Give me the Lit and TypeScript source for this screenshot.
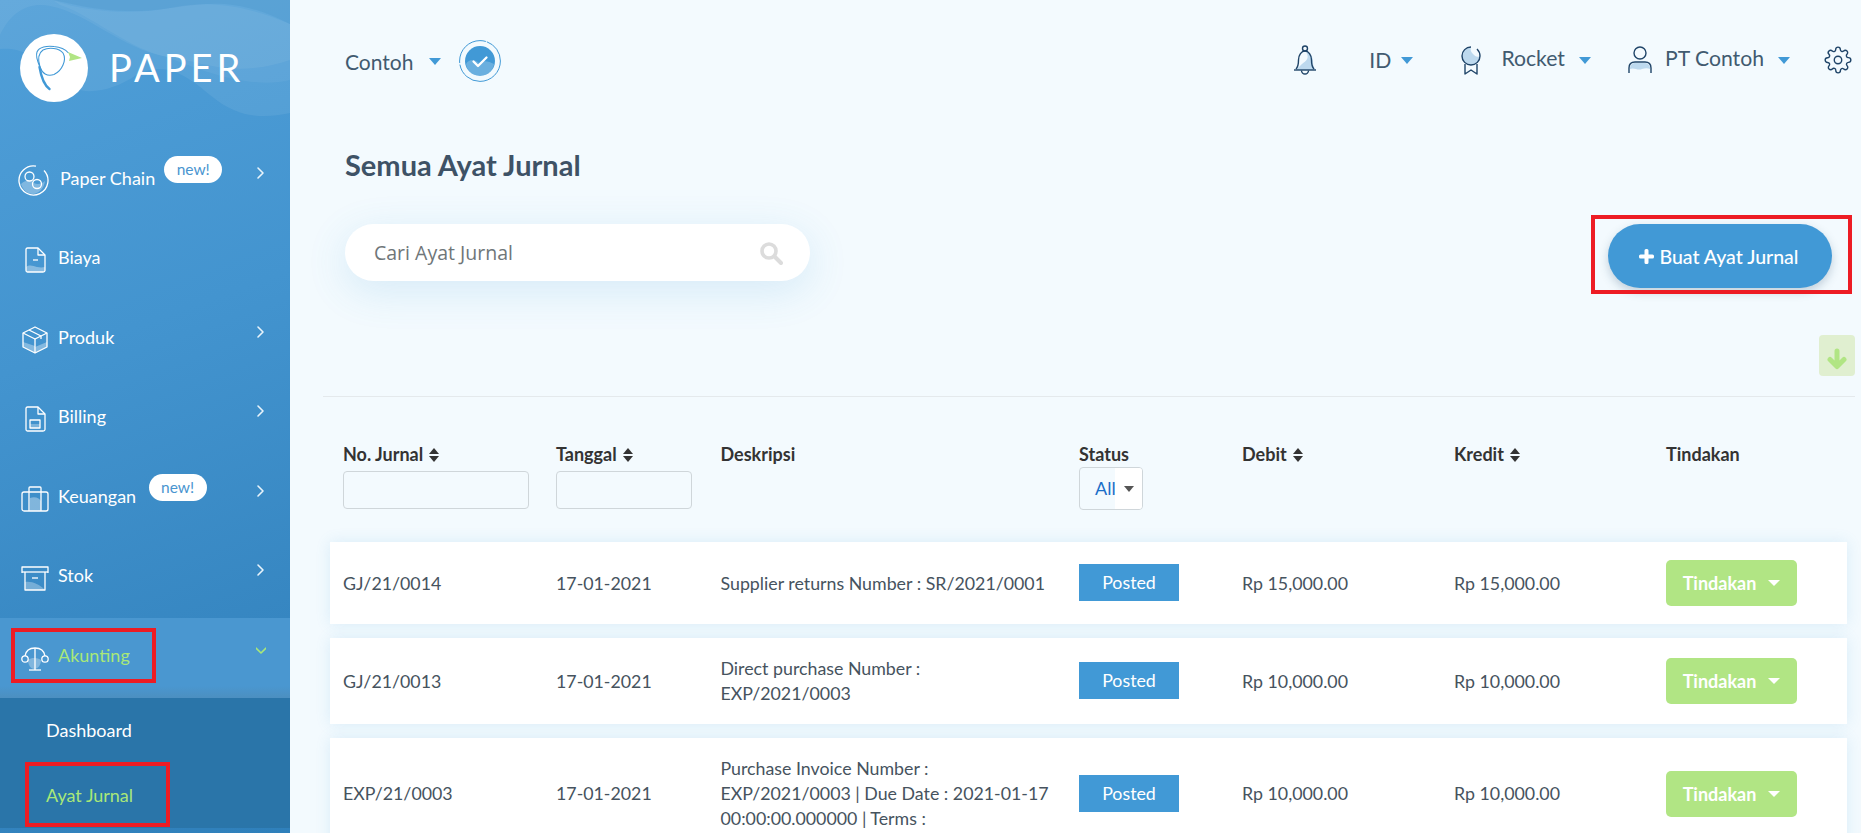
import { LitElement, html, css, svg } from "lit";
import { customElement } from "lit/decorators.js";

const caret = html`<span class="caret"></span>`;
const sort = html`<span class="sort"><i></i><b></b></span>`;
const chev = (down = false) => html`<svg class="chev" width="10" height="14" viewBox="0 0 10 14" fill="none" stroke="currentColor" stroke-width="1.6" stroke-linecap="round" stroke-linejoin="round">
  ${down ? svg`<path d="M0 5l5 5 5-5" />` : svg`<path d="M2 2l5 5-5 5" />`}</svg>`;

const icons: Record<string, unknown> = {
  chain: html`<svg class="ic big" viewBox="0 0 32 32" fill="none" stroke="#fff" stroke-width="1.3">
    <path d="M19 2.200A14.500 14.500 0 1 0 27 6.500" />
    <path d="M4 20c5-5 10-3 13-1s8 1 11-2c-1 8-7 13-12 13-6 0-10-4-12-10z" fill="#fff" fill-opacity=".3" stroke="none"/>
    <circle cx="12.500" cy="12.500" r="4.500"/><circle cx="20" cy="20" r="4.500"/></svg>`,
  biaya: html`<svg class="ic" viewBox="0 0 28 28" fill="none" stroke="#fff" stroke-width="1.3" stroke-linejoin="round">
    <path d="M14 2H6.500Q5 2 5 3.500V24.500Q5 26 6.500 26H22Q24 26 24 24.500V9L17 2z"/><path d="M17 2V9H24"/><path d="M12 14H17"/>
    <path d="M5 21c4-3 7-1 11 0 3 .7 6 .6 8 0v3.500Q24 26 22 26H6.500Q5 26 5 24.500z" fill="#fff" fill-opacity=".35" stroke="none"/></svg>`,
  produk: html`<svg class="ic" viewBox="0 0 28 28" fill="none" stroke="#fff" stroke-width="1.3" stroke-linejoin="round">
    <path d="M14 1L26 7V21L14 27L2 21V7z"/><path d="M2 7L14 13L26 7"/><path d="M14 13V27"/><path d="M8 4L20 10V13"/>
    <path d="M2 16L14 20V27L2 21zM14 27V21L26 16V21z" fill="#fff" fill-opacity=".35" stroke="none"/></svg>`,
  billing: html`<svg class="ic" viewBox="0 0 28 28" fill="none" stroke="#fff" stroke-width="1.3" stroke-linejoin="round">
    <path d="M14 2H6.500Q5 2 5 3.500V24.500Q5 26 6.500 26H22Q24 26 24 24.500V9L17 2z"/><path d="M17 2V9H24"/>
    <rect x="9" y="15" width="10" height="8"/><path d="M9 19H19V23H9z" fill="#fff" fill-opacity=".3" stroke="none"/></svg>`,
  keuangan: html`<svg class="ic" viewBox="0 0 28 28" fill="none" stroke="#fff" stroke-width="1.3" stroke-linejoin="round">
    <rect x="1" y="7" width="26" height="19" rx="2"/><path d="M8 26V3Q8 2 9 2H19Q20 2 20 3V26"/>
    <path d="M9 13c5-2 9 0 11 3v10H9z" fill="#fff" fill-opacity=".35" stroke="none"/></svg>`,
  stok: html`<svg class="ic" viewBox="0 0 28 28" fill="none" stroke="#fff" stroke-width="1.3" stroke-linejoin="round">
    <path d="M1 9V3H27V9"/><path d="M1 8H27"/><path d="M4 8V26H24V8"/><path d="M11 14H17"/>
    <path d="M4 18c7-1 14 2 20 8H4z" fill="#fff" fill-opacity=".3" stroke="none"/></svg>`,
  akunting: html`<svg class="ic" viewBox="0 0 28 28" fill="none" stroke="#fff" stroke-width="1.3" stroke-linejoin="round">
    <path d="M4 11C5 5 9 3 14 3s9 2 10 8"/><path d="M14 3V25"/><path d="M8 25H20"/>
    <circle cx="4" cy="14" r="3.200"/><circle cx="24" cy="14" r="3.200"/>
    <path d="M7 15c4-3 10-2 13 0 0 5-3 9-7 9-3 0-6-4-6-9z" fill="#fff" fill-opacity=".3" stroke="none"/></svg>`,
};

const bell = html`<svg width="28" height="32" viewBox="0 0 28 32" fill="none" stroke="#1f4468" stroke-width="1.4" stroke-linejoin="round">
  <path d="M15 8c5 1 7 5 7 10 0 4 1 6 3 8H5c0-.5 3-3 6-6 4-3 8-6 4-12z" fill="#bdd9ee" stroke="none"/>
  <circle cx="14" cy="4.500" r="2.500"/><path d="M5 25c2-2 2.500-5 2.500-9 0-5 3-9 6.500-9s6.500 4 6.500 9c0 4 .5 7 2.500 9"/><path d="M3 26H25"/><path d="M10.500 26.500a3.500 3.500 0 0 0 7 0"/></svg>`;
const medal = html`<svg width="26" height="32" viewBox="0 0 26 32" fill="none" stroke="#1f4468" stroke-width="1.4" stroke-linejoin="round">
  <path d="M13 3c-5 0-9 4-9 9s4 9 9 9 9-4 9-9c-3 2-5 0-7-2s-3-4-2-7z" fill="#bdd9ee" stroke="none"/><path d="M13 3c-5 0-9 4-9 9s4 9 9 9 9-4 9-9c0-2-1-5-3-7"/><path d="M7 20V30L13 26L19 30V20"/></svg>`;
const person = html`<svg width="26" height="32" viewBox="0 0 26 32" fill="none" stroke="#1f4468" stroke-width="1.4" stroke-linejoin="round">
  <circle cx="13" cy="9" r="6"/><path d="M3 25c4-2 8 2 12 0 3-1 6-1 8 0v-2c-1-3-3-4-5-4H8c-3 0-5 2-5 6z" fill="#bdd9ee" stroke="none"/><path d="M2 29V24Q2 18 8 18H18Q24 18 24 24V29"/></svg>`;
const gear = html`<svg width="28" height="30" viewBox="0 0 24 24" fill="none" stroke="#1f4468" stroke-width="1.200" stroke-linejoin="round">
  <circle cx="12" cy="12" r="3.200"/><path d="M19.400 15a1.650 1.650 0 0 0 .33 1.820l.06.06a2 2 0 1 1-2.830 2.830l-.06-.06a1.650 1.650 0 0 0-2.800 1.170V21a2 2 0 1 1-4 0v-.09a1.650 1.650 0 0 0-2.900-1.200l-.06.06a2 2 0 1 1-2.830-2.830l.06-.06a1.650 1.650 0 0 0-1.170-2.800H3a2 2 0 1 1 0-4h.09a1.650 1.650 0 0 0 1.200-2.900l-.06-.06a2 2 0 1 1 2.830-2.830l.06.06a1.650 1.650 0 0 0 1.820.33H9a1.650 1.650 0 0 0 1-1.510V3a2 2 0 1 1 4 0v.09a1.650 1.650 0 0 0 2.800 1.170l.06-.06a2 2 0 1 1 2.830 2.830l-.06.06a1.650 1.650 0 0 0-.33 1.820V9a1.650 1.650 0 0 0 1.510 1H21a2 2 0 1 1 0 4h-.09a1.650 1.650 0 0 0-1.510 1z"/></svg>`;

const rows = [
  ["GJ/21/0014", "17-01-2021", "Supplier returns Number : SR/2021/0001", "Rp 15,000.00"],
  ["GJ/21/0013", "17-01-2021", "Direct purchase Number : EXP/2021/0003", "Rp 10,000.00"],
  ["EXP/21/0003", "17-01-2021", "Purchase Invoice Number : EXP/2021/0003 | Due Date : 2021-01-17 00:00:00.000000 | Terms :", "Rp 10,000.00"],
];

const nav = [
  { key: "chain", label: "Paper Chain", chev: true, badge: "badge" },
  { key: "biaya", label: "Biaya" },
  { key: "produk", label: "Produk", chev: true },
  { key: "billing", label: "Billing", chev: true },
  { key: "keuangan", label: "Keuangan", chev: true, badge: "badge far" },
  { key: "stok", label: "Stok", chev: true },
];

@customElement("app-root")
export class AppRoot extends LitElement {
  static styles = css`
    :host { display: block; width: 1861px; height: 833px; overflow: hidden; font-family: Lato, "Liberation Sans", sans-serif; }
    .page { display: flex; height: 833px; background: #f3fafe; overflow: hidden; }
    aside { width: 290px; flex: none; height: 833px; position: relative; color: #fff; overflow: hidden;
      background: linear-gradient(160deg, #509fd8 0%, #4394cf 40%, #3585c0 80%, #2f80bb 100%); }
    .waves { position: absolute; left: 0; top: 0; }
    .brand { position: relative; display: flex; align-items: flex-start; padding: 34px 0 0 20px; height: 106px; }
    .logo { width: 68px; height: 68px; border-radius: 50%; background: #fff; display: block; }
    .brand span { margin: 10px 0 0 21px; font-size: 38px; line-height: 47px; letter-spacing: 4px; font-weight: 400; }
    .item { position: relative; height: 79.5px; display: flex; align-items: center; padding: 0 24px 0 21px; font-size: 18px; box-sizing: border-box; }
    .label { margin-bottom: 4px; }
    .ic { width: 28px; height: 28px; flex: none; margin-right: 9px; margin-top: 2px; }
    .ic.big { width: 32px; height: 32px; margin-left: -4px; margin-right: 11px; margin-top: 1px; }
    .chev { margin-left: auto; margin-bottom: 14px; color: #e8f4fb; }
    .badge { background: #fff; color: #4a95d0; border-radius: 14px; width: 58px; height: 27px; line-height: 26px; text-align: center; font-size: 15.5px; margin-bottom: 21px; margin-left: 9px; }
    .badge.far { margin-left: 12.5px; }
    .item.active { background: linear-gradient(180deg, #4a97d0 0, #4a97d0 85%, #4c8fc0 100%); color: #a9e878; margin-top: 1px; }
    .item.active .label { margin-bottom: 5px; }
    .item.active .chev { color: #a9e878; margin-bottom: 16px; }
    .sub { background: #2a75a9; height: 130px; }
    .sub div { position: relative; height: 65px; padding-left: 46px; display: flex; align-items: center; font-size: 18px; }
    .sub .on { color: #a9e878; }
    .hl { position: absolute; border: 4.5px solid #ed1c24; box-sizing: border-box; pointer-events: none; }
    .hl.a { left: 11px; top: 10px; width: 145px; height: 55px; }
    .hl.b { left: 25px; top: -1px; width: 145px; height: 65px; }
    .hl.c { left: -17px; top: -9px; width: 261px; height: 79px; }

    main { flex: 1; min-width: 0; color: #415a70; }
    .top { height: 120px; display: flex; align-items: center; font-size: 21.2px; padding: 2px 9px 0 55px; box-sizing: border-box; }
    .contoh { font-size: 21px; }
    .caret { display: inline-block; width: 0; height: 0; border-left: 6.5px solid transparent; border-right: 6.5px solid transparent; border-top: 7px solid #4199d6; }
    .check { margin-left: 18px; display: block; }
    .right { margin-left: auto; margin-bottom: 2px; display: flex; align-items: center; }
    .right span.t { line-height: 24px; }
    .up { margin-bottom: 4px; }
    .c10 { margin-left: 10px; } .c14 { margin-left: 14px; }
    .ib { display: flex; }
    .m50 { margin-left: 50px; } .m45 { margin-left: 45px; } .m17 { margin-left: 17px; } .m36 { margin-left: 36px; } .m12 { margin-left: 12px; } .m34 { margin-left: 34px; }
    .m15 { margin-left: 16px; }
    h1 { margin: 28px 0 0 55px; font-size: 29px; line-height: 34px; font-weight: 700; color: #3e5266; height: 35px; }
    .tools { display: flex; justify-content: space-between; align-items: flex-start; margin: 41px 29px 0 55px; }
    .search { width: 465px; height: 57px; background: #fff; border-radius: 29px; display: flex; align-items: center; box-shadow: 0 10px 40px rgba(65,153,214,.16); box-sizing: border-box; padding: 0 27px 0 29px; }
    .search input { border: 0; outline: 0; flex: 1; min-width: 0; background: none; font: 400 19.5px "Open Sans", sans-serif; color: #666; padding: 0; }
    .search input::placeholder { color: #6f7679; opacity: 1; }
    .btnwrap { position: relative; }
    .btn { width: 224px; height: 64px; background: #4199d6; border-radius: 32px; border: 0; color: #fff; font: 500 19.5px Lato, sans-serif; display: flex; align-items: center; justify-content: center; gap: 5px; box-shadow: 0 4px 10px rgba(40,80,110,.25); padding: 0 2px 0 0; }
    .dl { display: flex; justify-content: flex-end; margin: 47px 6px 0 0; }
    .dl div { width: 36px; height: 41px; background: #e0efd0; border-radius: 4px; display: flex; align-items: center; justify-content: center; padding-top: 6px; box-sizing: border-box; }
    .rule { height: 1px; background: #e4e9ec; margin: 20px 6px 0 33px; }
    .table { margin: 45px 14px 0 40px; }
    .grid { display: grid; grid-template-columns: 213px 164.5px 358.5px 163px 212px 212px 1fr; padding-left: 13px; }
    .head { height: 100px; color: #333; font-weight: 700; font-size: 18px; line-height: 25px; }
    .head > div { white-space: nowrap; }
    .sort { display: inline-block; vertical-align: middle; margin-left: 6px; margin-top: -2px; }
    .sort i, .sort b { display: block; width: 0; height: 0; border-left: 5.5px solid transparent; border-right: 5.5px solid transparent; }
    .sort i { border-bottom: 6.5px solid #333; margin-bottom: 2px; }
    .sort b { border-top: 6.5px solid #333; }
    .head input { display: block; box-sizing: border-box; margin-top: 4px; height: 38px; background: transparent; border: 1px solid #cfd6da; border-radius: 4px; outline: 0; padding: 0; }
    .i1 { width: 186px; } .i2 { width: 136px; }
    .sel { width: 64px; height: 43px; box-sizing: border-box; border: 1px solid #cfd6da; border-radius: 4px; display: flex; font-weight: 400; font-size: 18px; color: #1a6ec8; overflow: hidden; }
    .sel span { width: 35px; padding-left: 15px; box-sizing: border-box; line-height: 40px; }
    .sel em { flex: 1; background: #fff; display: flex; align-items: center; justify-content: center; }
    .sel em::after { content: ""; border-left: 5.5px solid transparent; border-right: 5.5px solid transparent; border-top: 6.5px solid #555; }
    .row { background: #fff; align-items: center; padding-top: 18px; padding-bottom: 18px; margin-bottom: 14px; font-size: 17.8px; line-height: 25px; color: #46535e; box-shadow: 0 0 14px rgba(65,153,214,.14); }
    .desc { width: 332px; }
    .status { display: block; width: 100px; height: 37px; line-height: 37px; margin-bottom: 1px; text-align: center; background: #4199d6; color: #fff; }
    .act { width: 131px; height: 46px; border-radius: 5px; background: #b1e584; color: #fff; font: 700 18px Lato, sans-serif; border: 0; display: flex; align-items: center; justify-content: center; gap: 12px; padding: 0; }
    .act .caret { border-top-color: #fff; border-left-width: 6px; border-right-width: 6px; border-top-width: 6px; }
  `;

  render() {
    return html`<div class="page">
      <aside>
        <svg class="waves" width="290" height="125" viewBox="0 0 290 125">
          <path d="M0 49C22 47 38 58 55 76 78 100 110 92 135 76 165 58 190 78 210 95 240 120 265 118 290 113V0H0z" fill="#fff" fill-opacity=".07"/>
          <path d="M0 35C12 10 30 2 50 6 90 14 120 48 167 57 200 60 230 80 290 60V0H0z" fill="#fff" fill-opacity=".06"/>
          <path d="M53 0C80 6 105 12 140 11 170 10 195 2 225 4 250 6 270 14 290 24V0z" fill="#2f80bb" fill-opacity=".16"/>
          <path d="M53 0C90 14 140 14 170 8 200 1 240 2 290 24V80C250 90 200 70 167 57 130 50 90 14 60 5z" fill="#fff" fill-opacity=".05"/>
        </svg>
        <div class="brand">
          <svg class="logo" viewBox="20 34 68 68" fill="none" stroke="#4199d6" stroke-width="1.1">
            <path d="M39.500 66C37 60 35.500 56 37 52 39 47 47 45.500 54 46.500 60 47 65 49 68.500 53" />
            <path d="M40 67C37.500 59 38.500 53 43 50 49 47 59 48 63 53 67 60 62 71 54 74.500 47 77 42 73 40 67" />
            <path d="M49.500 89C44 85 41 76 39.500 67" stroke-width="2.400" stroke-linecap="round"/>
            <path d="M68 52L82 58 69 61 70 57z" fill="#b1e584" stroke="none"/>
          </svg>
          <span>PAPER</span>
        </div>
        ${nav.map((n) => html`<div class="item">${icons[n.key]}<span class="label">${n.label}</span>${n.badge ? html`<span class=${n.badge}>new!</span>` : ""}${n.chev ? chev() : ""}</div>`)}
        <div class="item active">${icons.akunting}<span class="label">Akunting</span>${chev(true)}<div class="hl a"></div></div>
        <div class="sub">
          <div>Dashboard</div>
          <div class="on">Ayat Jurnal<span class="hl b"></span></div>
        </div>
      </aside>
      <main>
        <div class="top">
          <span class="contoh">Contoh</span><span class="caret m15"></span>
          <svg class="check" width="42" height="42" viewBox="0 0 42 42" fill="none">
            <circle cx="21" cy="21" r="20.400" stroke="#4199d6" stroke-width="1" stroke-dasharray="60 1.500 40 1"/>
            <circle cx="21" cy="21" r="15" fill="#4199d6"/>
            <path d="M7 24c4-6 9-4 13-1 4-3 10-2 15 1-1 7-7 12-14 12S8 31 7 24z" fill="#fff" fill-opacity=".22"/>
            <path d="M14.500 21.500l4.500 4.500 8.500-8.500" stroke="#fff" stroke-width="2.300" stroke-linecap="round" stroke-linejoin="round"/>
          </svg>
          <div class="right">
            ${bell}
            <span class="t m50">ID</span><span class="caret c10"></span>
            <span class="ib m45">${medal}</span>
            <span class="t up m17">Rocket</span><span class="caret c14"></span>
            <span class="ib m36">${person}</span>
            <span class="t up m12">PT Contoh</span><span class="caret c14"></span>
            <span class="ib m34">${gear}</span>
          </div>
        </div>
        <h1>Semua Ayat Jurnal</h1>
        <div class="tools">
          <div class="search"><input placeholder="Cari Ayat Jurnal" />
            <svg width="24" height="24" viewBox="0 0 24 24" fill="none" stroke="#dcdcdc"><circle cx="10" cy="10" r="7" stroke-width="3.600"/><path d="M15.500 15.500L22 22" stroke-width="4" stroke-linecap="round"/></svg>
          </div>
          <div class="btnwrap">
            <button class="btn"><svg width="15" height="15" viewBox="0 0 15 15"><path d="M5.500 1.500Q5.500 0 7 0H8Q9.500 0 9.500 1.500V5.500H13.500Q15 5.500 15 7V8Q15 9.500 13.500 9.500H9.500V13.500Q9.500 15 8 15H7Q5.500 15 5.500 13.500V9.500H1.500Q0 9.500 0 8V7Q0 5.500 1.500 5.500H5.500z" fill="#fff"/></svg>Buat Ayat Jurnal</button>
            <div class="hl c"></div>
          </div>
        </div>
        <div class="dl"><div><svg width="22" height="22" viewBox="0 0 22 22" fill="none" stroke="#b1e584" stroke-width="5" stroke-linecap="round" stroke-linejoin="round"><path d="M11 3V18M4 11.500l7 7 7-7"/></svg></div></div>
        <div class="rule"></div>
        <div class="table">
          <div class="grid head">
            <div>No. Jurnal${sort}<input class="i1" /></div>
            <div>Tanggal${sort}<input class="i2" /></div>
            <div>Deskripsi</div>
            <div>Status<div class="sel"><span>All</span><em></em></div></div>
            <div>Debit${sort}</div>
            <div>Kredit${sort}</div>
            <div>Tindakan</div>
          </div>
          ${rows.map((r) => html`<div class="grid row">
            <div>${r[0]}</div><div>${r[1]}</div><div class="desc">${r[2]}</div>
            <div><span class="status">Posted</span></div>
            <div>${r[3]}</div><div>${r[3]}</div>
            <div><button class="act">Tindakan ${caret}</button></div>
          </div>`)}
        </div>
      </main>
    </div>`;
  }
}
